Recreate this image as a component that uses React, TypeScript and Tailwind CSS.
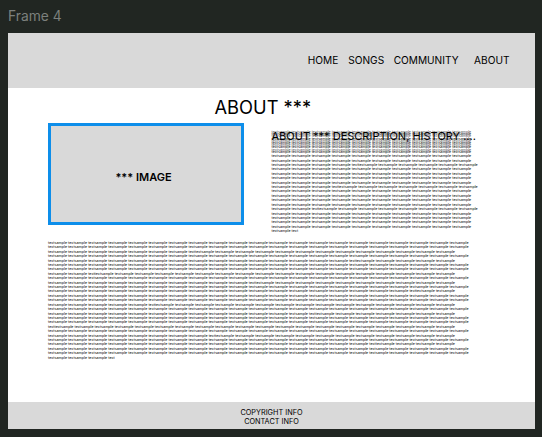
const words = (count: number) => 'textsample '.repeat(count);
const chunk = words(49) + 'text';
const body = chunk.repeat(11);
const side = words(74) + 'text' + chunk.repeat(3);
const sideIntro = words(50);

export default function App() {
  return (
    <div className="h-[437px] w-[542px] bg-[#212622] font-['Inter',sans-serif] text-black">
      <div className="flex h-[33px] items-center pl-2 text-[13.8px] text-[#7c807d]">Frame 4</div>
      <div className="ml-2 flex h-[396px] w-[527px] flex-col bg-white">
        <header className="flex h-[55px] shrink-0 items-center justify-end bg-[#d9d9d9] pr-[25.5px] text-[10.15px]">
          <span>HOME</span>
          <span className="ml-[10px]">SONGS</span>
          <span className="ml-[9.5px]">COMMUNITY</span>
          <span className="ml-[15.5px]">ABOUT</span>
        </header>
        <main className="h-[314px] shrink-0 pl-10">
          <h1 className="h-[35px] pl-[166.5px] pt-[8px] text-[18.3px] leading-[22px]">ABOUT ***</h1>
          <div className="flex h-[118px]">
            <div className="-ml-[0.5px] flex h-[102px] w-[196px] items-center justify-center border-[3px] border-[#0d8eea] bg-[#d9d9d9] pr-1 pt-[6px] text-[11px] font-semibold">*** IMAGE</div>
            <div className="relative ml-7 h-[110px] w-[212px] pt-[9.2px]">
              <p className="text-[3.63px] leading-[4.4px] tracking-[0.031px]">{side}</p>
              <p className="absolute left-0 top-[7px] w-[212px] text-[3.63px] leading-[4.4px] tracking-[0.031px] text-[#555]">{sideIntro}</p>
              <h2 className="absolute left-0 top-[7px] whitespace-nowrap text-[11px] leading-[13px]">ABOUT *** DESCRIPTION, HISTORY ....</h2>
            </div>
          </div>
          <p className="w-[423px] text-[3.63px] leading-[4.4px] tracking-[0.031px]">{body}</p>
        </main>
        <footer className="flex flex-1 flex-col items-center justify-center bg-[#d9d9d9] pt-[2px] text-[7.3px] leading-[9px]">
          <span>COPYRIGHT INFO</span>
          <span>CONTACT INFO</span>
        </footer>
      </div>
    </div>
  );
}
